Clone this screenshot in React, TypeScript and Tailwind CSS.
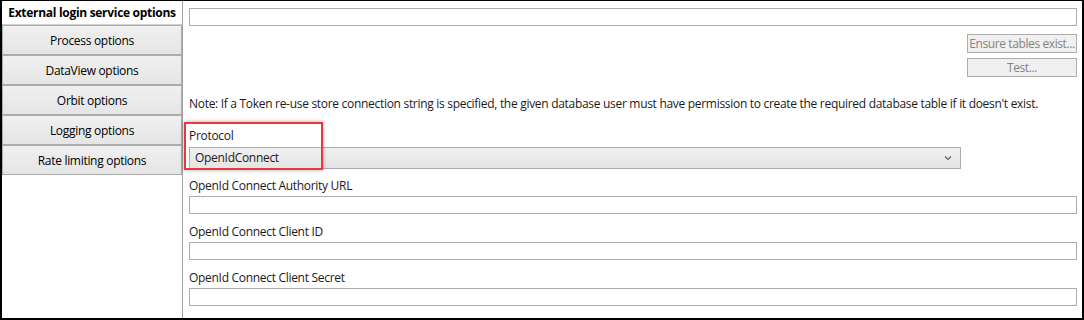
import React from "react";

const font = { fontFamily: '"Open Sans", "Noto Sans", sans-serif' };

function NavButton({ label }: { label: string }) {
  return (
    <div className="h-[30px] border border-[#acacac] bg-gradient-to-b from-[#f0f0f0] to-[#e5e5e5] flex items-center justify-center text-[12px] text-[#000] tracking-[-0.3px] pt-[2px]">
      {label}
    </div>
  );
}

function TextField() {
  return <div className="h-[18px] border border-[#acacac] bg-white" />;
}

function GrayButton({ label }: { label: string }) {
  return (
    <div className="w-[110px] h-[19px] border border-[#adadad] bg-[#f0f0f0] flex items-center justify-center text-[12px] text-[#838383] tracking-[-0.4px] whitespace-nowrap overflow-hidden">
      {label}
    </div>
  );
}

export default function App() {
  return (
    <div
      className="w-[1084px] h-[320px] bg-white border-2 border-t border-black flex overflow-hidden text-[#1a1a1a]"
      style={font}
    >
      <div className="w-[181px] shrink-0 border-r border-[#a0a0a0] flex flex-col">
        <div className="h-[24px] flex items-center justify-center text-[12px] font-bold text-black tracking-[-0.3px] border-b border-[#d0d0d0]">
          External login service options
        </div>
        <div className="flex flex-col">
          <NavButton label="Process options" />
          <NavButton label="DataView options" />
          <NavButton label="Orbit options" />
          <NavButton label="Logging options" />
          <NavButton label="Rate limiting options" />
        </div>
      </div>
      <div className="flex-1 pl-[6px] pr-[5px] flex flex-col text-[12px] tracking-[-0.3px] relative">
        <div className="h-[7px] relative overflow-hidden">
          <span className="absolute left-[4px] top-[-15px] whitespace-nowrap leading-[16px] text-[#1a1a1a]">
            Token re-use store connection string (leave empty to use in-memory only)
          </span>
        </div>
        <TextField />
        <div className="flex flex-col items-end gap-[5px] mt-[8px]">
          <GrayButton label="Ensure tables exist..." />
          <GrayButton label="Test..." />
        </div>
        <div className="mt-[19px] leading-[16px] whitespace-nowrap">
          Note: If a Token re-use store connection string is specified, the given database user must have permission to create the required database table if it doesn't exist.
        </div>
        <div className="relative mt-[16px]">
          <div className="leading-[16px]">Protocol</div>
          <div className="mt-[3px] w-[772px] h-[22px] border border-[#acacac] bg-gradient-to-b from-[#f0f0f0] to-[#e5e5e5] flex items-center justify-between pl-[5px] pr-[8px]">
            <span>OpenIdConnect</span>
            <svg width="8" height="6" viewBox="0 0 8 6">
              <path d="M1 1.5 L4 4.5 L7 1.5" stroke="#606060" strokeWidth="1.2" fill="none" />
            </svg>
          </div>
          <div className="absolute left-[-5px] top-[-6px] w-[139px] h-[48px] border-2 border-[#e8383d] shadow-[0_0_4px_rgba(0,0,0,0.35)] pointer-events-none" />
        </div>
        <div className="mt-[9px] leading-[16px]">OpenId Connect Authority URL</div>
        <div className="mt-[2px]"><TextField /></div>
        <div className="mt-[10px] leading-[16px]">OpenId Connect Client ID</div>
        <div className="mt-[2px]"><TextField /></div>
        <div className="mt-[10px] leading-[16px]">OpenId Connect Client Secret</div>
        <div className="mt-[2px]"><TextField /></div>
      </div>
    </div>
  );
}
